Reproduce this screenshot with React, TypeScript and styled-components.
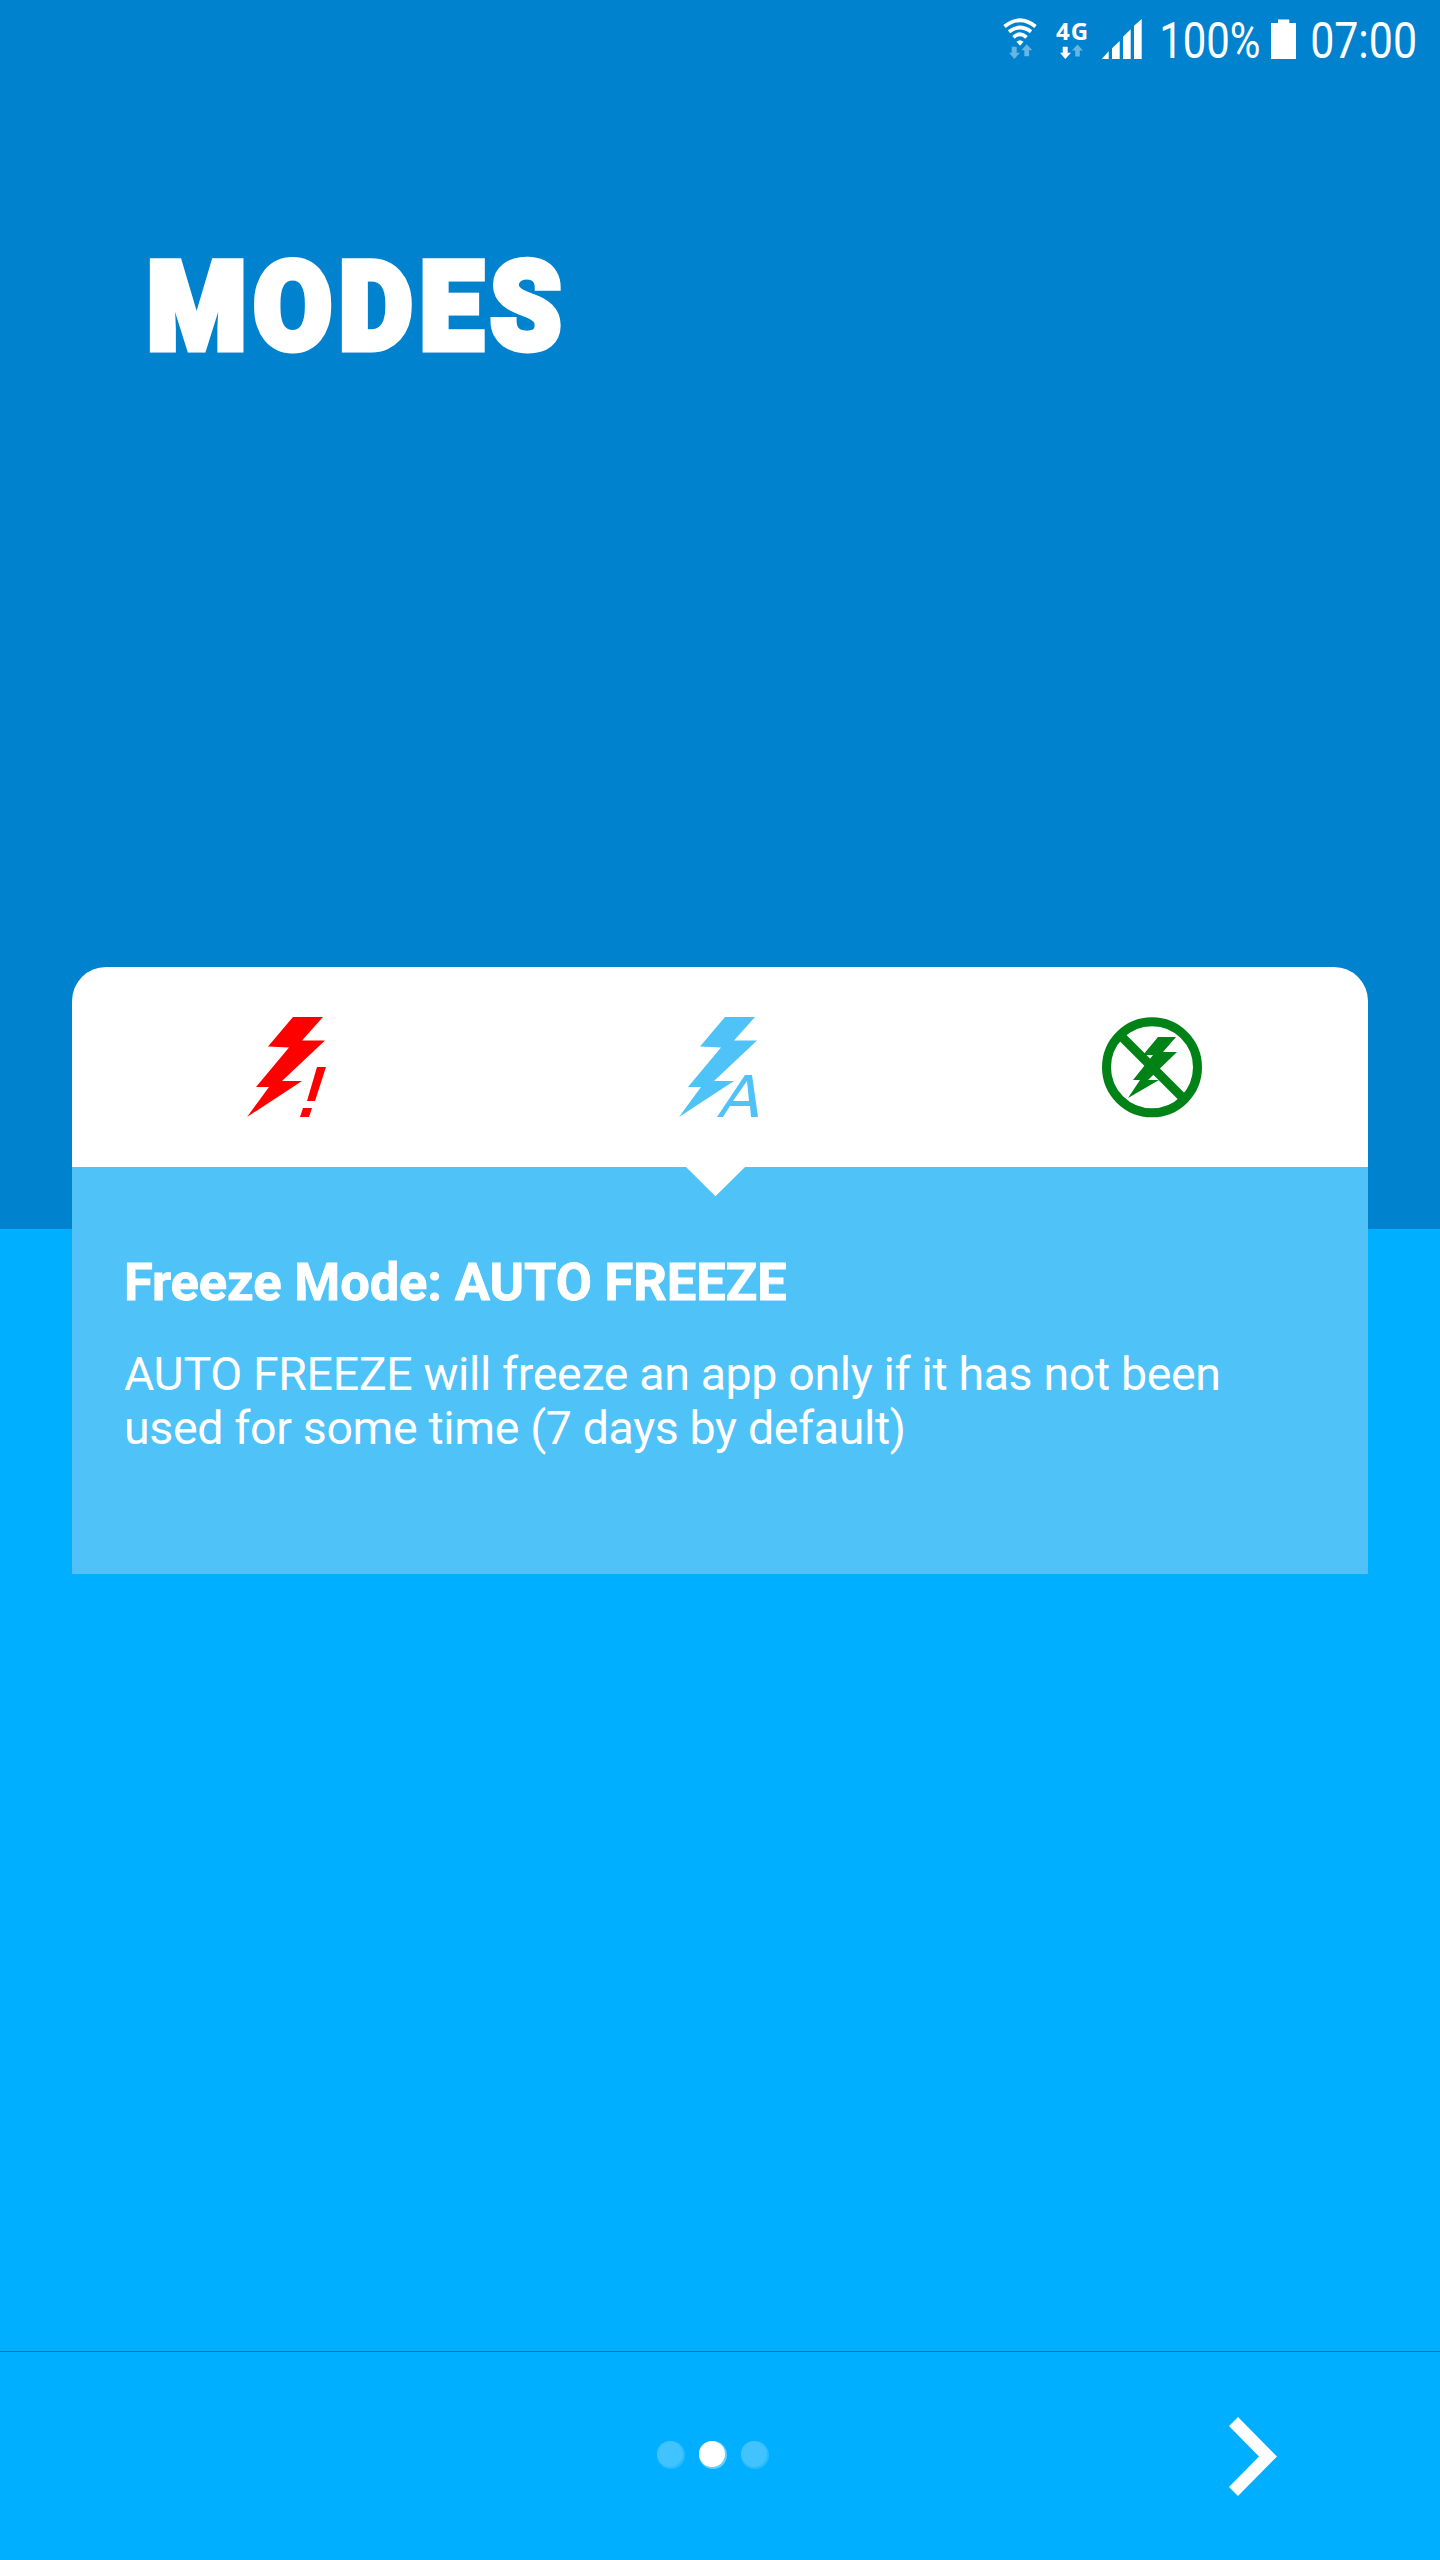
import React from "react";
import styled, { createGlobalStyle } from "styled-components";

const GlobalStyle = createGlobalStyle`
  *, *::before, *::after { box-sizing: border-box; }
  body { margin: 0; }
`;

const Screen = styled.main`
  display: flex;
  flex-direction: column;
  width: 1440px;
  height: 2560px;
  overflow: hidden;
  color: #fff;
  font-family: Roboto, "Liberation Sans", sans-serif;
  background: linear-gradient(#0082ce 0 1229px, #00afff 1229px);
`;

const StatusBar = styled.header`
  display: flex;
  flex: none;
  height: 84px;
  padding: 19px 23px 0 0;
  justify-content: flex-end;
`;

const StatusIcon = styled.svg<{ $gap: number }>`
  display: block;
  flex: none;
  margin-right: ${(p) => p.$gap}px;
  overflow: visible;
`;

const Network = styled.div`
  width: 32px;
  height: 42px;
  margin-right: 12px;
  display: flex;
  flex-direction: column;
  justify-content: space-between;
`;

const NetworkLabel = styled.span`
  height: 22px;
  margin-left: -1px;
  padding-top: 1px;
  font: 700 24px/22px "Open Sans", sans-serif;
  letter-spacing: 1px;
  white-space: nowrap;
`;

const StatusText = styled.span<{ $width: number; $scale: number }>`
  width: ${(p) => p.$width}px;
  font-size: 49.5px;
  line-height: 44px;
  text-indent: -1px;
  white-space: nowrap;
  transform: scaleX(${(p) => p.$scale});
  transform-origin: 0 0;
`;

const Title = styled.h1`
  flex: none;
  height: 883px;
  margin: 0;
  padding: 159px 0 0 147px;
  font-size: 122px;
  font-weight: 900;
  line-height: 130px;
  letter-spacing: 7.7px;
  transform: scaleX(0.93);
  transform-origin: 147px 0;
  -webkit-text-stroke: 7px #fff;
`;

const Card = styled.section`
  flex: none;
  width: 1296px;
  margin: 0 72px;
`;

const Tabs = styled.nav`
  display: grid;
  grid-template-columns: 433px 432px 431px;
  height: 200px;
  padding-top: 50px;
  border-radius: 34px 34px 0 0;
  background: #fff;
`;

const Tab = styled.button<{ $inset: number }>`
  display: flex;
  height: 102px;
  padding: 0 0 0 ${(p) => p.$inset}px;
  border: 0;
  background: none;
`;

const Panel = styled.div`
  position: relative;
  height: 407px;
  padding: 87px 52px 0;
  background: #4fc2f8;
`;

const Pointer = styled.svg`
  position: absolute;
  top: 0;
  left: 613px;
`;

const PanelTitle = styled.h2`
  margin: 0;
  font-size: 52.5px;
  font-weight: 700;
  line-height: 56px;
  letter-spacing: -0.14px;
  white-space: nowrap;
  -webkit-text-stroke: 0.8px #fff;
`;

const PanelText = styled.p`
  margin: 37px 0 0;
  font-size: 46.5px;
  line-height: 54px;
  letter-spacing: -0.36px;
  white-space: nowrap;
`;

const Footer = styled.footer`
  display: flex;
  align-items: flex-start;
  height: 209px;
  margin-top: auto;
  border-top: 1px solid #0075b5;
`;

const Dots = styled.div`
  display: flex;
  gap: 14px;
  margin: 89px 0 0 657px;
`;

const Dot = styled.span<{ $active?: boolean }>`
  width: 28px;
  height: 28px;
  border-radius: 50%;
  background: ${(p) => (p.$active ? "#66cfff" : "#26baff")};

  &::before {
    content: "";
    display: block;
    width: 26px;
    height: 26px;
    border-radius: 50%;
    background: ${(p) => (p.$active ? "#fff" : "#40c3ff")};
  }
`;

const Next = styled.button`
  margin: 65px 0 0 460px;
  padding: 0;
  border: 0;
  background: none;
`;

const BOLT = "M46 0H76L55 23.5H78L35 64H55L0 100 22 70H9L42 30.5 21 29.5Z";

export default function App() {
  return (
    <Screen>
      <GlobalStyle />
      <StatusBar>
        <StatusIcon $gap={20} width="34" height="42" viewBox="0 0 34 42" fill="none" stroke="#fff" strokeWidth="3.8">
          <path d="M1.500 7.500Q17-5 32.500 7.500M6 12.700Q17 4.300 28 12.700M10.500 18.300Q17 12.200 23.500 18.300" />
          <path d="M13.500 22.800Q17 19.500 20.500 22.800L17 26.700Z" fill="#fff" stroke="none" />
          <path d="M8.700 27.700h5v6h3.300l-5.700 6.300-5.300-6.300h2.700zM21.300 37.300v-6h-3l5.400-6 5.600 6h-3.200v6z" fill="#66b5e2" stroke="none" />
        </StatusIcon>
        <Network>
          <NetworkLabel>4G</NetworkLabel>
          <svg width="32" height="17" viewBox="0 0 32 17">
            <path d="M5.700 2.700h5v6h3.300l-5.700 6.300-5.300-6.300h2.700z" fill="#fff" />
            <path d="M18.200 12.500v-6h-3.200l5.500-6 5.500 6h-3.200v6z" fill="#66b5e2" />
          </svg>
        </Network>
        <StatusIcon $gap={18} width="41" height="41" viewBox="0 0 41 41" fill="#fff">
          <path d="M0.700 40L7.700 32.300V40ZM11 40V29.300L18.700 22V40ZM22 40V17.700L29.700 10.300V40ZM33 40V6.700L40.700 0V40Z" />
        </StatusIcon>
        <StatusText $width={111} $scale={0.847}>100%</StatusText>
        <StatusIcon $gap={15} width="25" height="41" viewBox="0 0 25 41">
          <path d="M0 4H7V0.500H18.300V4H25V40H0Z" fill="#fff" />
        </StatusIcon>
        <StatusText $width={106} $scale={0.867}>07:00</StatusText>
      </StatusBar>
      <Title>MODES</Title>
      <Card>
        <Tabs>
          <Tab $inset={175} aria-label="Freeze">
            <svg width="80" height="102" viewBox="0 0 80 102" fill="red">
              <path d={BOLT} />
              <path d="M70 50H79L68 84H60ZM56 91H65L62 100H53Z" />
            </svg>
          </Tab>
          <Tab $inset={174} aria-label="Auto freeze">
            <svg width="80" height="102" viewBox="0 0 80 102" fill="#4fc2f8">
              <path d={BOLT} />
              <path fillRule="evenodd" d="M38 100L66 58H73L79 100H72L71 89H51L44 100ZM54 84H70L68 64Z" />
            </svg>
          </Tab>
          <Tab $inset={165} aria-label="Never freeze">
            <svg width="100" height="102" viewBox="0 0 100 102" fill="#008217">
              <circle cx="50" cy="50.300" r="45.500" fill="none" stroke="#008217" strokeWidth="9" />
              <path d="M18 18L81 81" stroke="#008217" strokeWidth="9" />
              <path d="M56 20H74L61 35H75L46 63H57L26 81 38 63H31L51 38H41Z" />
            </svg>
          </Tab>
        </Tabs>
        <Panel>
          <Pointer width="60" height="30" viewBox="0 0 60 30">
            <path d="M1 0H60L30.500 29.300Z" fill="#fff" />
          </Pointer>
          <PanelTitle>Freeze Mode: AUTO FREEZE</PanelTitle>
          <PanelText>
            AUTO FREEZE will freeze an app only if it has not been
            <br />
            used for some time (7 days by default)
          </PanelText>
        </Panel>
      </Card>
      <Footer>
        <Dots>
          <Dot />
          <Dot $active />
          <Dot />
        </Dots>
        <Next aria-label="Next">
          <svg width="50" height="80" viewBox="0 0 50 80">
            <path d="M9 0L48 39.500L9 79L0 70L30 39.500L0 9Z" fill="#fff" />
          </svg>
        </Next>
      </Footer>
    </Screen>
  );
}
